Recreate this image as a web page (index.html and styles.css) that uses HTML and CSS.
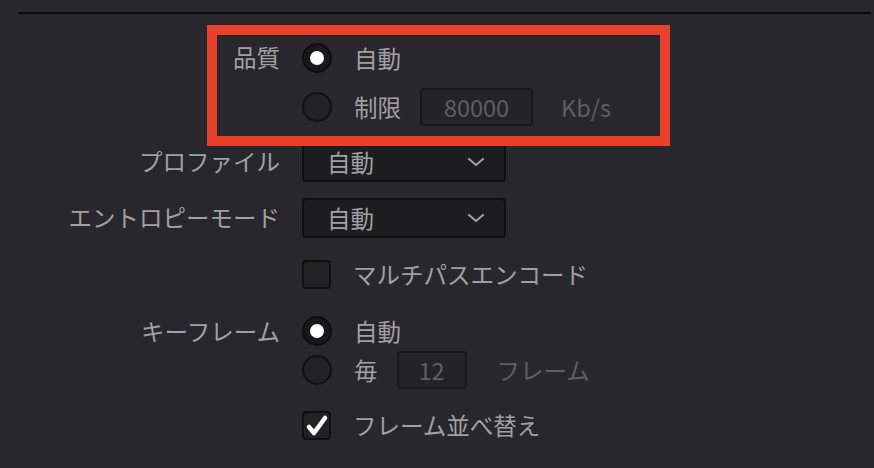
FILE: index.html
```html
<!DOCTYPE html>
<html lang="ja">
<head>
  <meta charset="UTF-8" />
  <meta name="viewport" content="width=device-width, initial-scale=1.0" />
  <title>エンコード設定</title>
  <link rel="stylesheet" href="styles.css">
</head>
<body>
  <div class="rule"></div>

  <div class="settings">
    <div class="row row-quality">
      <div class="label">品質</div>
      <div class="options">
        <div class="line">
          <span class="radio checked"></span>
          <span class="text">自動</span>
        </div>
        <div class="line">
          <span class="radio"></span>
          <span class="text">制限</span>
          <span class="field field-wide">80000</span>
          <span class="unit">Kb/s</span>
        </div>
      </div>
      <div class="highlight"></div>
    </div>

    <div class="row row-select">
      <div class="label">プロファイル</div>
      <div class="select">
        <span>自動</span>
        <svg class="chevron" width="18" height="10" viewBox="0 0 18 10"><polyline points="2,2 9,8 16,2" /></svg>
      </div>
    </div>

    <div class="row row-select">
      <div class="label">エントロピーモード</div>
      <div class="select">
        <span>自動</span>
        <svg class="chevron" width="18" height="10" viewBox="0 0 18 10"><polyline points="2,2 9,8 16,2" /></svg>
      </div>
    </div>

    <div class="row row-check">
      <div class="label"></div>
      <div class="line">
        <span class="checkbox"></span>
        <span class="text">マルチパスエンコード</span>
      </div>
    </div>

    <div class="row row-keyframe">
      <div class="label">キーフレーム</div>
      <div class="options">
        <div class="line">
          <span class="radio checked"></span>
          <span class="text">自動</span>
        </div>
        <div class="line">
          <span class="radio"></span>
          <span class="text">毎</span>
          <span class="field field-narrow">12</span>
          <span class="unit">フレーム</span>
        </div>
      </div>
    </div>

    <div class="row row-check">
      <div class="label"></div>
      <div class="line">
        <span class="checkbox">
          <svg width="25" height="25" viewBox="0 0 25 25"><polyline points="5,14 10,20 21,5" /></svg>
        </span>
        <span class="text">フレーム並べ替え</span>
      </div>
    </div>
  </div>
</body>
</html>
```

FILE: styles.css
```css
* {
  margin: 0;
  padding: 0;
  box-sizing: border-box;
}

body {
  background-color: #28272e;
  font-family: "Noto Sans CJK JP", "Noto Sans", sans-serif;
  font-size: 23.5px;
  color: #a0a0a2;
  padding-top: 12px;
  overflow: hidden;
}

.rule {
  height: 2px;
  margin: 0 3px 0 18px;
  background-color: #0b0b0d;
}

.settings {
  padding-top: 24px;
}

.row {
  display: grid;
  grid-template-columns: 280px 1fr;
  column-gap: 22px;
  align-items: start;
}

.label {
  text-align: right;
  line-height: 38px;
  white-space: nowrap;
}

.options {
  display: flex;
  flex-direction: column;
  gap: 9px;
}

.line {
  display: flex;
  align-items: center;
  height: 40px;
}

.text {
  margin-left: 22px;
  line-height: 38px;
  white-space: nowrap;
}

/* radio buttons */
.radio {
  width: 30px;
  height: 30px;
  border-radius: 50%;
  background-color: #222225;
  border: 2px solid #111113;
  display: flex;
  align-items: center;
  justify-content: center;
  flex-shrink: 0;
}

.radio.checked {
  background-color: #18181a;
  border-color: #0e0e10;
}

.radio.checked::after {
  content: "";
  width: 14px;
  height: 14px;
  border-radius: 50%;
  background-color: #fff;
}

/* number fields */
.field {
  height: 38px;
  margin-left: 19px;
  background-color: #242428;
  border: 2px solid #18181b;
  border-radius: 4px;
  color: #5e5e62;
  display: flex;
  align-items: center;
  justify-content: center;
}

.field-wide {
  width: 113px;
}

.field-narrow {
  width: 70px;
}

.unit {
  color: #5e5e62;
  white-space: nowrap;
}

.field-wide + .unit {
  margin-left: 28px;
}

.field-narrow + .unit {
  margin-left: 30px;
}

/* highlight frame */
.row-quality {
  position: relative;
}

.highlight {
  position: absolute;
  left: 207px;
  top: -13px;
  width: 463px;
  height: 121px;
  border: 10px solid #e8412b;
}

/* dropdowns */
.row-select {
  margin-top: 15px;
}

.row-select + .row-select {
  margin-top: 16px;
}

.select {
  width: 204px;
  height: 40px;
  background-color: #1d1d1f;
  border: 2px solid #0e0e10;
  border-radius: 4px;
  display: flex;
  align-items: center;
  justify-content: space-between;
  padding: 0 19px 0 23px;
}

.chevron polyline {
  fill: none;
  stroke: #9d9d9f;
  stroke-width: 2.2;
  stroke-linecap: round;
  stroke-linejoin: round;
}

/* checkboxes */
.row-check {
  margin-top: 16px;
}

.checkbox {
  width: 29px;
  height: 29px;
  background-color: #222224;
  border: 2px solid #0f0f11;
  border-radius: 4px;
  display: flex;
  align-items: center;
  justify-content: center;
  flex-shrink: 0;
}

.checkbox polyline {
  fill: none;
  stroke: #fff;
  stroke-width: 4.5;
  stroke-linecap: round;
  stroke-linejoin: round;
}

/* keyframes */
.row-keyframe {
  margin-top: 18px;
}

.row-keyframe .options {
  gap: 1px;
}

.row-keyframe .line {
  height: 38px;
}
```
